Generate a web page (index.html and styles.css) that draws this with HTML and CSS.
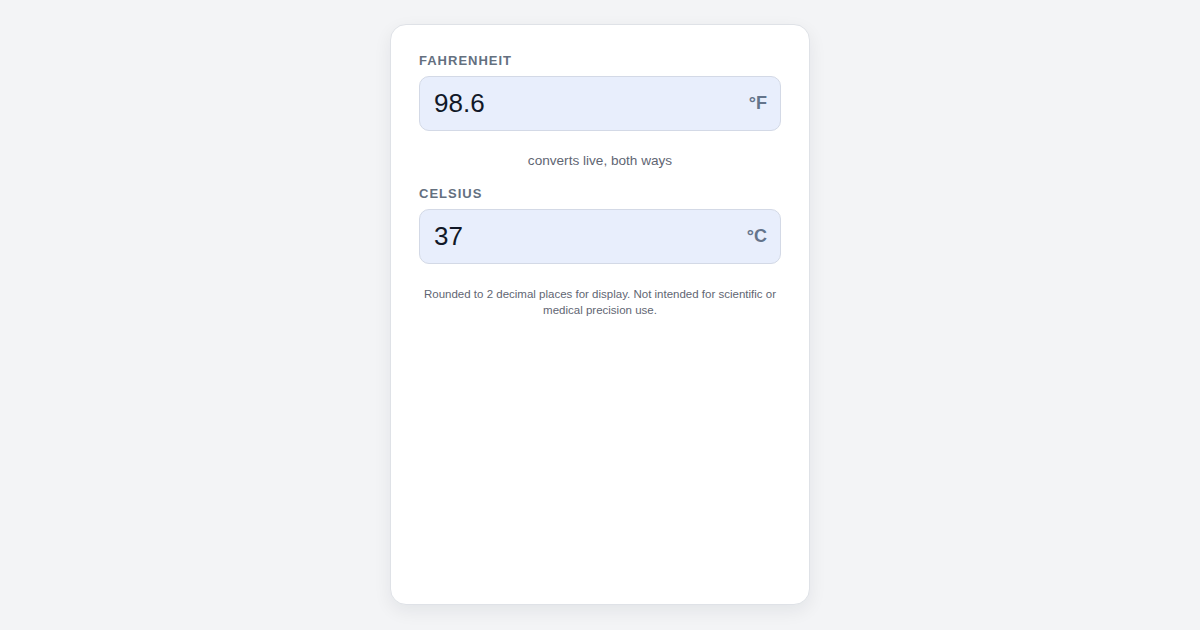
FILE: index.html
```html
<!DOCTYPE html>
<html lang="en">
<head>
  <meta charset="UTF-8">
  <title>Temperature Converter</title>
  <link rel="stylesheet" href="styles.css">
</head>
<body>
  <main class="card">
    <label class="field-label" for="fahrenheit">Fahrenheit</label>
    <div class="field">
      <input id="fahrenheit" type="text" value="98.6">
      <span class="unit">°F</span>
    </div>

    <p class="hint">converts live, both ways</p>

    <label class="field-label" for="celsius">Celsius</label>
    <div class="field">
      <input id="celsius" type="text" value="37">
      <span class="unit">°C</span>
    </div>

    <p class="note">Rounded to 2 decimal places for display. Not intended for scientific or medical precision use.</p>
  </main>

  <script>
    const f = document.getElementById('fahrenheit');
    const c = document.getElementById('celsius');
    const round = (n) => String(Math.round(n * 100) / 100);

    f.addEventListener('input', () => {
      const v = parseFloat(f.value);
      c.value = isNaN(v) ? '' : round((v - 32) * 5 / 9);
    });
    c.addEventListener('input', () => {
      const v = parseFloat(c.value);
      f.value = isNaN(v) ? '' : round(v * 9 / 5 + 32);
    });
  </script>
</body>
</html>
```

FILE: styles.css
```css
* {
  box-sizing: border-box;
}

body {
  margin: 0;
  padding: 24px 0 25px;
  height: 100vh;
  background-color: #f3f4f6;
  font-family: "Liberation Sans", Arial, sans-serif;
  color: #111827;
}

.card {
  width: 420px;
  height: 100%;
  margin: 0 auto;
  padding: 28px;
  background-color: #fff;
  border: 1px solid #dfe2e7;
  border-radius: 16px;
  box-shadow: 0 6px 18px rgba(15, 23, 42, 0.07);
}

.field-label {
  display: block;
  font-size: 13px;
  line-height: 16px;
  font-weight: bold;
  letter-spacing: 1px;
  text-transform: uppercase;
  color: #64707f;
  margin-bottom: 7px;
}

.field {
  display: flex;
  align-items: center;
  height: 55px;
  padding: 0 13px 0 14px;
  background-color: #e8eefc;
  border: 1px solid #d3d9e6;
  border-radius: 10px;
}

.field input {
  flex: 1;
  min-width: 0;
  border: none;
  background: transparent;
  font-family: inherit;
  font-size: 26px;
  color: #111827;
  padding: 0;
  outline: none;
}

.unit {
  font-size: 18px;
  font-weight: bold;
  color: #64748b;
}

.hint {
  margin: 21px 0 16px;
  text-align: center;
  font-size: 13.6px;
  line-height: 18px;
  color: #5f6673;
}

.note {
  margin: 22px 0 0;
  text-align: center;
  font-size: 11.5px;
  line-height: 16px;
  color: #5f6673;
}
```
